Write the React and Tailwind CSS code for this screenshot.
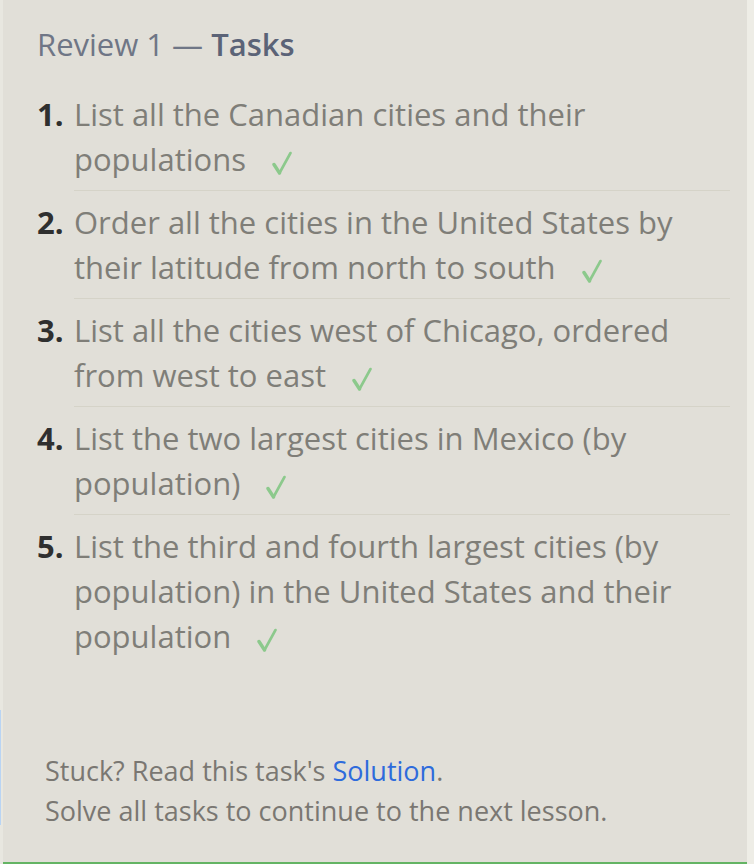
import React from 'react';

const tasks = [
  'List all the Canadian cities and their populations',
  'Order all the cities in the United States by their latitude from north to south',
  'List all the cities west of Chicago, ordered from west to east',
  'List the two largest cities in Mexico (by population)',
  'List the third and fourth largest cities (by population) in the United States and their population',
];

const Check = () => (
  <svg
    width="20"
    height="24"
    viewBox="0 0 20 24"
    className="inline-block ml-[26px] align-[-4px]"
    fill="none"
    stroke="#8cc98c"
    strokeLinecap="round"
    strokeLinejoin="round"
  >
    <path d="M2 13.5 L7.5 22" strokeWidth="3.4" />
    <path d="M7.5 22 L18.5 2" strokeWidth="2.6" />
  </svg>
);

const Task = ({ n, text, last }) => (
  <li className="flex">
    <span className="w-[37px] shrink-0 pt-[9px] font-bold text-[#2f2f2f]">{n}.</span>
    <div className={`flex-1 pt-[9px] pb-[8px] ${last ? '' : 'border-b border-[#d5d3c8]'}`}>
      {text}
      <Check />
    </div>
  </li>
);

export default function App() {
  return (
    <div className="flex w-[754px] min-h-[864px] bg-[#eeede6] font-['Open_Sans',sans-serif]">
      <div className="w-[3px] flex flex-col bg-[#e8e7e0]">
        <div className="h-[710px]" />
        <div className="h-[115px] w-[1px] bg-[#b9d4f3]" />
      </div>
      <div className="flex-1 flex flex-col bg-[#e1dfd8] border-b-2 border-[#64b464]">
        <div className="pl-[34px] pr-[17px] pt-[22px]">
          <h2 className="text-[31px] leading-[44px] text-[#6f7686]">
            Review 1 — <span className="font-semibold text-[#5b6377]">Tasks</span>
          </h2>
          <ol className="mt-[17px] text-[31px] leading-[45px] text-[#7f7e78]">
            {tasks.map((t, i) => (
              <Task key={i} n={i + 1} text={t} last={i === tasks.length - 1} />
            ))}
          </ol>
        </div>
        <div className="mt-auto pl-[42px] pb-[31px] text-[27px] leading-[40px] text-[#7a7772]">
          <p>
            Stuck? Read this task's <a className="text-[#2e6bdc]">Solution</a>.
          </p>
          <p>Solve all tasks to continue to the next lesson.</p>
        </div>
      </div>
      <div className="w-[7px]" />
    </div>
  );
}
